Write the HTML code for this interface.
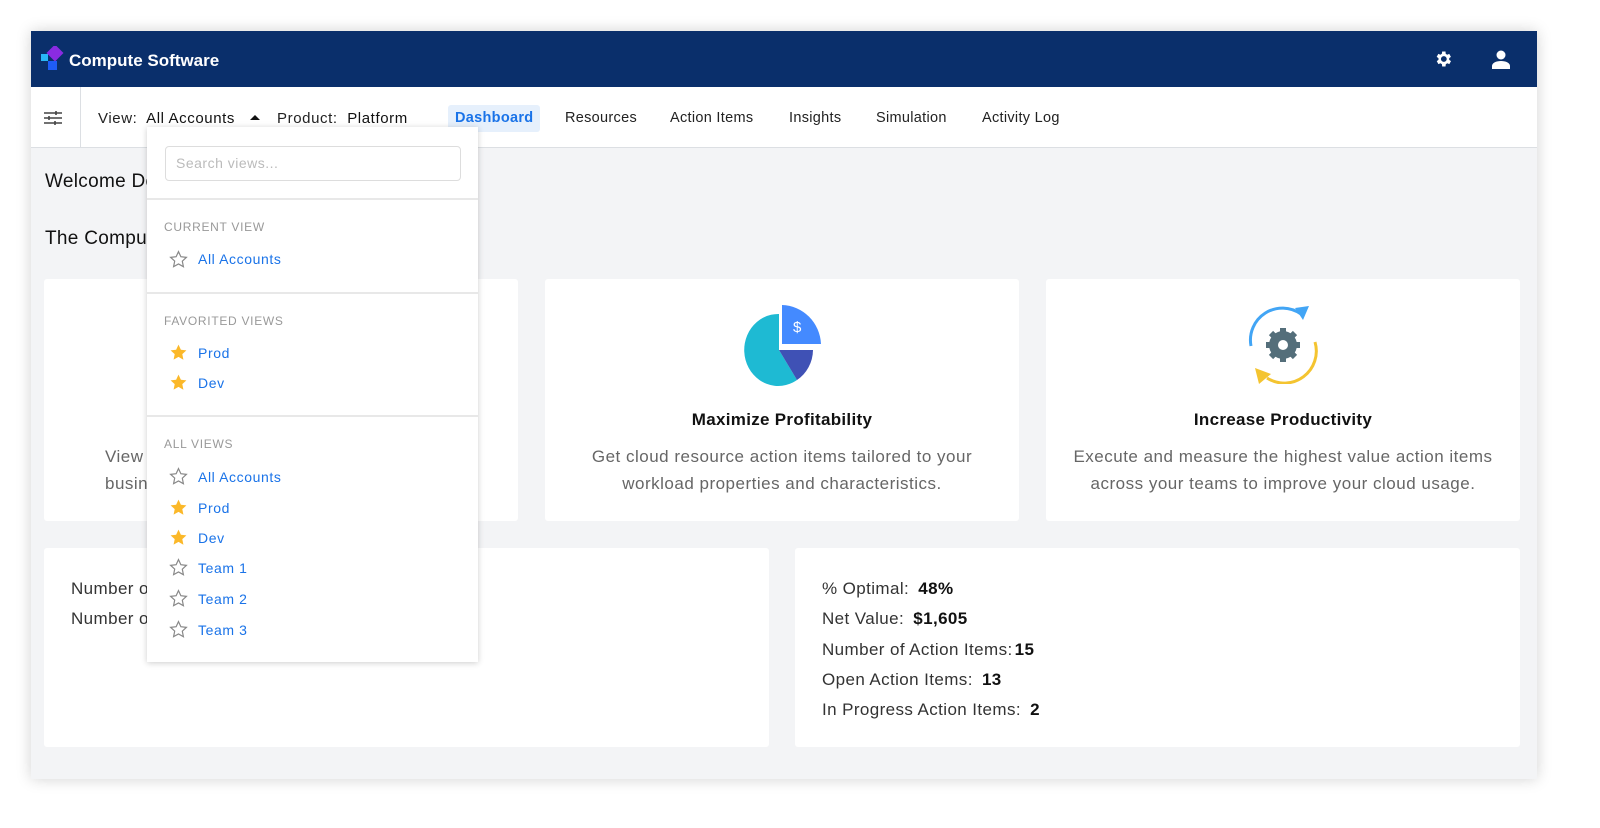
<!DOCTYPE html>
<html><head><meta charset="utf-8"><style>
*{box-sizing:border-box;margin:0;padding:0}
body{width:1600px;height:828px;background:#fff;font-family:"Liberation Sans",sans-serif;position:relative;overflow:hidden;letter-spacing:.3px}
.a{position:absolute}
.frame{left:31px;top:31px;width:1506px;height:748px;background:#f3f4f6;box-shadow:0 0 14px rgba(0,0,0,.18)}
.hdr{left:31px;top:31px;width:1506px;height:56px;background:#0a2f6b}
.nav{left:31px;top:87px;width:1506px;height:61px;background:#fff;border-bottom:1px solid #dcdfe3}
.card{background:#fff;border-radius:3px}
.t{font-size:15px;color:#222;top:110px}
.ct{font-size:17px;font-weight:bold;color:#111;text-align:center}
.cd{font-size:17px;color:#666;text-align:center;line-height:27px;letter-spacing:.5px}
.st{font-size:17px;color:#333;letter-spacing:.4px}
.st b{color:#111;margin-left:4px}
.dd{left:147px;top:127px;width:331px;height:535px;background:#fff;box-shadow:0 1px 6px rgba(0,0,0,.2)}
.sec{font-size:12px;color:#999;letter-spacing:.7px;left:17px}
.it{font-size:14px;color:#1a73e8;left:51px;letter-spacing:.6px}
.hr{left:0;width:331px;height:2px;background:#e8e8e8}
.s{left:22px;width:19px;height:19px}
</style></head><body>
<div class="a frame"></div>
<div class="a hdr"></div>
<svg class="a" style="left:40px;top:46px" width="26" height="27" viewBox="0 0 26 27"><rect x="9" y="1" width="12" height="12" transform="rotate(45 15 7)" fill="#8a2be2"/><rect x="1" y="8" width="7" height="7" fill="#29b6f6"/><rect x="8" y="15" width="9" height="9" fill="#1e5cf5"/></svg>
<div class="a" style="left:69px;top:51px;color:#fff;font-size:17px;font-weight:bold;letter-spacing:0">Compute Software</div>
<svg class="a" style="left:1433px;top:49px" width="20" height="20" viewBox="0 0 24 24"><path fill="#fff" d="M19.4 13a7.5 7.5 0 000-2l2.1-1.6-2-3.5-2.5 1a7 7 0 00-1.7-1L15 3h-4l-.4 2.9a7 7 0 00-1.7 1l-2.5-1-2 3.5L6.6 11a7.5 7.5 0 000 2l-2.1 1.6 2 3.5 2.5-1a7 7 0 001.7 1L11 21h4l.4-2.9a7 7 0 001.7-1l2.5 1 2-3.5zM13 15.5a3.5 3.5 0 110-7 3.5 3.5 0 010 7z"/></svg>
<svg class="a" style="left:1492px;top:50px" width="18" height="19" viewBox="0 0 18 19"><circle cx="9" cy="5" r="4.5" fill="#fff"/><path d="M0 19v-3c0-3 4-5 9-5s9 2 9 5v3z" fill="#fff"/></svg>
<div class="a nav"></div>
<div class="a" style="left:80px;top:87px;width:1px;height:61px;background:#dcdfe3"></div>
<svg class="a" style="left:44px;top:110px" width="18" height="16" viewBox="0 0 18 16" stroke="#444" stroke-width="1.6"><path d="M0 3h18M0 8h18M0 13h18"/><path d="M12 1v4M5 6v4M11 11v4"/></svg>
<div class="a t" style="left:98px;letter-spacing:.6px">View:&nbsp; <span style="color:#111">All Accounts</span></div>
<div class="a" style="left:250px;top:115px;width:0;height:0;border-left:5px solid transparent;border-right:5px solid transparent;border-bottom:5px solid #111"></div>
<div class="a t" style="left:277px;letter-spacing:.6px">Product:&nbsp; <span style="color:#111">Platform</span></div>
<div class="a" style="left:448px;top:105px;width:92px;height:27px;background:#e6f0fc;border-radius:3px"></div>
<div class="a t" style="left:455px;color:#1a73e8;font-weight:bold;font-size:14.5px">Dashboard</div>
<div class="a t" style="left:565px;font-size:14.5px">Resources</div>
<div class="a t" style="left:670px;font-size:14.5px">Action Items</div>
<div class="a t" style="left:789px;font-size:14.5px">Insights</div>
<div class="a t" style="left:876px;font-size:14.5px">Simulation</div>
<div class="a t" style="left:982px;font-size:14.5px">Activity Log</div>
<div class="a" style="left:45px;top:171px;font-size:19px;color:#111">Welcome Demo</div>
<div class="a" style="left:45px;top:228px;font-size:19px;color:#111">The Compute Software Platform</div>
<div class="a card" style="left:44px;top:279px;width:474px;height:242px"></div>
<div class="a cd" style="left:105px;top:443px;width:400px;text-align:left">View your cloud infrastructure and<br>business metrics in one place.</div>
<div class="a card" style="left:545px;top:279px;width:474px;height:242px"></div>
<svg class="a" style="left:742px;top:304px" width="82" height="82" viewBox="0 0 82 82"><path d="M37 10A34 36 0 1 0 55 76L37 46Z" fill="#1ebad3"/><path d="M37 46L55 76A34 36 0 0 0 71 46Z" fill="#3f51b5"/><path d="M40 1A40 41 0 0 1 79 40H40Z" fill="#448aff"/><text x="51" y="28" fill="#fff" font-size="15" font-family="Liberation Sans">$</text></svg>
<div class="a ct" style="left:545px;top:410px;width:474px">Maximize Profitability</div>
<div class="a cd" style="left:545px;top:443px;width:474px">Get cloud resource action items tailored to your<br>workload properties and characteristics.</div>
<div class="a card" style="left:1046px;top:279px;width:474px;height:242px"></div>
<svg class="a" style="left:1243px;top:304px" width="80" height="80" viewBox="0 0 80 80"><path d="M8 42A32 32 0 0 1 58 10" stroke="#42a5f5" stroke-width="3" fill="none"/><path d="M52 4L66 2 60 16Z" fill="#42a5f5"/><path d="M72 38A32 32 0 0 1 24 74" stroke="#f4c430" stroke-width="3" fill="none"/><path d="M12 64L28 70 16 80Z" fill="#f4c430"/><circle cx="40" cy="41" r="14" fill="#546e7a"/><g stroke="#546e7a" stroke-width="6"><path d="M40 24v34M23 41h34M28 29l24 24M52 29L28 53"/></g><circle cx="40" cy="41" r="5" fill="#fff"/></svg>
<div class="a ct" style="left:1046px;top:410px;width:474px">Increase Productivity</div>
<div class="a cd" style="left:1046px;top:443px;width:474px">Execute and measure the highest value action items<br>across your teams to improve your cloud usage.</div>
<div class="a card" style="left:44px;top:548px;width:725px;height:199px"></div>
<div class="a st" style="left:71px;top:579px">Number of Accounts:</div>
<div class="a st" style="left:71px;top:609px">Number of Resources:</div>
<div class="a card" style="left:795px;top:548px;width:725px;height:199px"></div>
<div class="a st" style="left:822px;top:579px">% Optimal: <b>48%</b></div>
<div class="a st" style="left:822px;top:609px">Net Value: <b>$1,605</b></div>
<div class="a st" style="left:822px;top:640px">Number of Action Items:<b style="margin-left:2px">15</b></div>
<div class="a st" style="left:822px;top:670px">Open Action Items: <b>13</b></div>
<div class="a st" style="left:822px;top:700px">In Progress Action Items: <b>2</b></div>
<div class="a dd">
<div class="a" style="left:18px;top:19px;width:296px;height:35px;border:1.5px solid #ddd;border-radius:4px;font-size:14px;color:#bbb;padding:8px 10px;letter-spacing:.5px">Search views...</div>
<div class="a hr" style="top:71px"></div>
<div class="a sec" style="top:93px">CURRENT VIEW</div>
<svg class="a s" style="top:123px" viewBox="0 0 24 24"><path d="M12 2l3 6.5 7 .8-5.2 4.8 1.4 7L12 17.6 5.8 21l1.4-7L2 9.3l7-.8z" fill="none" stroke="#888" stroke-width="1.5"/></svg>
<div class="a it" style="top:124px">All Accounts</div>
<div class="a hr" style="top:165px"></div>
<div class="a sec" style="top:187px">FAVORITED VIEWS</div>
<svg class="a s" style="top:216px" viewBox="0 0 24 24"><path d="M12 2l3 6.5 7 .8-5.2 4.8 1.4 7L12 17.6 5.8 21l1.4-7L2 9.3l7-.8z" fill="#fbb829"/></svg>
<div class="a it" style="top:218px">Prod</div>
<svg class="a s" style="top:246px" viewBox="0 0 24 24"><path d="M12 2l3 6.5 7 .8-5.2 4.8 1.4 7L12 17.6 5.8 21l1.4-7L2 9.3l7-.8z" fill="#fbb829"/></svg>
<div class="a it" style="top:248px">Dev</div>
<div class="a hr" style="top:288px"></div>
<div class="a sec" style="top:310px">ALL VIEWS</div>
<svg class="a s" style="top:340px" viewBox="0 0 24 24"><path d="M12 2l3 6.5 7 .8-5.2 4.8 1.4 7L12 17.6 5.8 21l1.4-7L2 9.3l7-.8z" fill="none" stroke="#888" stroke-width="1.5"/></svg>
<div class="a it" style="top:342px">All Accounts</div>
<svg class="a s" style="top:371px" viewBox="0 0 24 24"><path d="M12 2l3 6.5 7 .8-5.2 4.8 1.4 7L12 17.6 5.8 21l1.4-7L2 9.3l7-.8z" fill="#fbb829"/></svg>
<div class="a it" style="top:373px">Prod</div>
<svg class="a s" style="top:401px" viewBox="0 0 24 24"><path d="M12 2l3 6.5 7 .8-5.2 4.8 1.4 7L12 17.6 5.8 21l1.4-7L2 9.3l7-.8z" fill="#fbb829"/></svg>
<div class="a it" style="top:403px">Dev</div>
<svg class="a s" style="top:431px" viewBox="0 0 24 24"><path d="M12 2l3 6.5 7 .8-5.2 4.8 1.4 7L12 17.6 5.8 21l1.4-7L2 9.3l7-.8z" fill="none" stroke="#888" stroke-width="1.5"/></svg>
<div class="a it" style="top:433px">Team 1</div>
<svg class="a s" style="top:462px" viewBox="0 0 24 24"><path d="M12 2l3 6.5 7 .8-5.2 4.8 1.4 7L12 17.6 5.8 21l1.4-7L2 9.3l7-.8z" fill="none" stroke="#888" stroke-width="1.5"/></svg>
<div class="a it" style="top:464px">Team 2</div>
<svg class="a s" style="top:493px" viewBox="0 0 24 24"><path d="M12 2l3 6.5 7 .8-5.2 4.8 1.4 7L12 17.6 5.8 21l1.4-7L2 9.3l7-.8z" fill="none" stroke="#888" stroke-width="1.5"/></svg>
<div class="a it" style="top:495px">Team 3</div>
</div>
</body></html>
